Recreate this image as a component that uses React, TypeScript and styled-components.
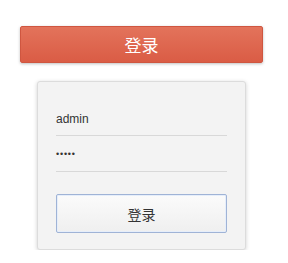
import React from "react";
import styled, { createGlobalStyle } from "styled-components";

const Global = createGlobalStyle`
  html, body { margin: 0; padding: 0; background: #ffffff; }
  body { font-family: "Liberation Sans", Arial, "Noto Sans CJK SC", sans-serif; }
`;

const Page = styled.div`
  display: flex;
  flex-direction: column;
  padding-top: 26px;
`;

const PrimaryButton = styled.button`
  margin-left: 20px;
  width: 243px;
  height: 37px;
  border: 1px solid #cf5640;
  border-radius: 2px;
  background: linear-gradient(to bottom, #e3735b 0%, #da5c45 100%);
  box-shadow: 0 1px 3px rgba(0, 0, 0, 0.25);
  color: #ffffff;
  font-family: "Noto Sans CJK SC", sans-serif;
  font-size: 17px;
  padding: 0;
  display: flex;
  align-items: center;
  justify-content: center;
`;

const Card = styled.div`
  margin-top: 18px;
  margin-left: 37px;
  width: 209px;
  box-sizing: border-box;
  background: #f3f3f3;
  border: 1px solid #dcdcdc;
  border-radius: 3px;
  box-shadow: 0 1px 4px rgba(0, 0, 0, 0.18);
  padding: 17px 18px 16px 18px;
  display: flex;
  flex-direction: column;
`;

const Field = styled.div<{ $first?: boolean }>`
  height: ${(p) => (p.$first ? 37 : 36)}px;
  box-sizing: border-box;
  border-bottom: 1px solid #d8d8d8;
  display: flex;
  align-items: center;
  padding-top: ${(p) => (p.$first ? 3 : 1)}px;
  color: #333333;
  font-size: 12px;
`;

const Dots = styled.span`
  font-size: 9px;
  letter-spacing: 0.8px;
  color: #333;
`;

const SecondaryButton = styled.button`
  margin-top: 22px;
  height: 39px;
  width: 100%;
  box-sizing: border-box;
  border: 1px solid #9fb3d6;
  border-radius: 2px;
  background: linear-gradient(to bottom, #fbfbfb 0%, #efefef 100%);
  box-shadow: inset 0 0 0 1px #e6eefa;
  color: #333333;
  font-family: "Noto Sans CJK SC", sans-serif;
  font-size: 14px;
  padding: 0;
`;

export default function App() {
  return (
    <>
      <Global />
      <Page>
        <PrimaryButton>登录</PrimaryButton>
        <Card>
          <Field $first>admin</Field>
          <Field>
            <Dots>•••••</Dots>
          </Field>
          <SecondaryButton>登录</SecondaryButton>
        </Card>
      </Page>
    </>
  );
}
